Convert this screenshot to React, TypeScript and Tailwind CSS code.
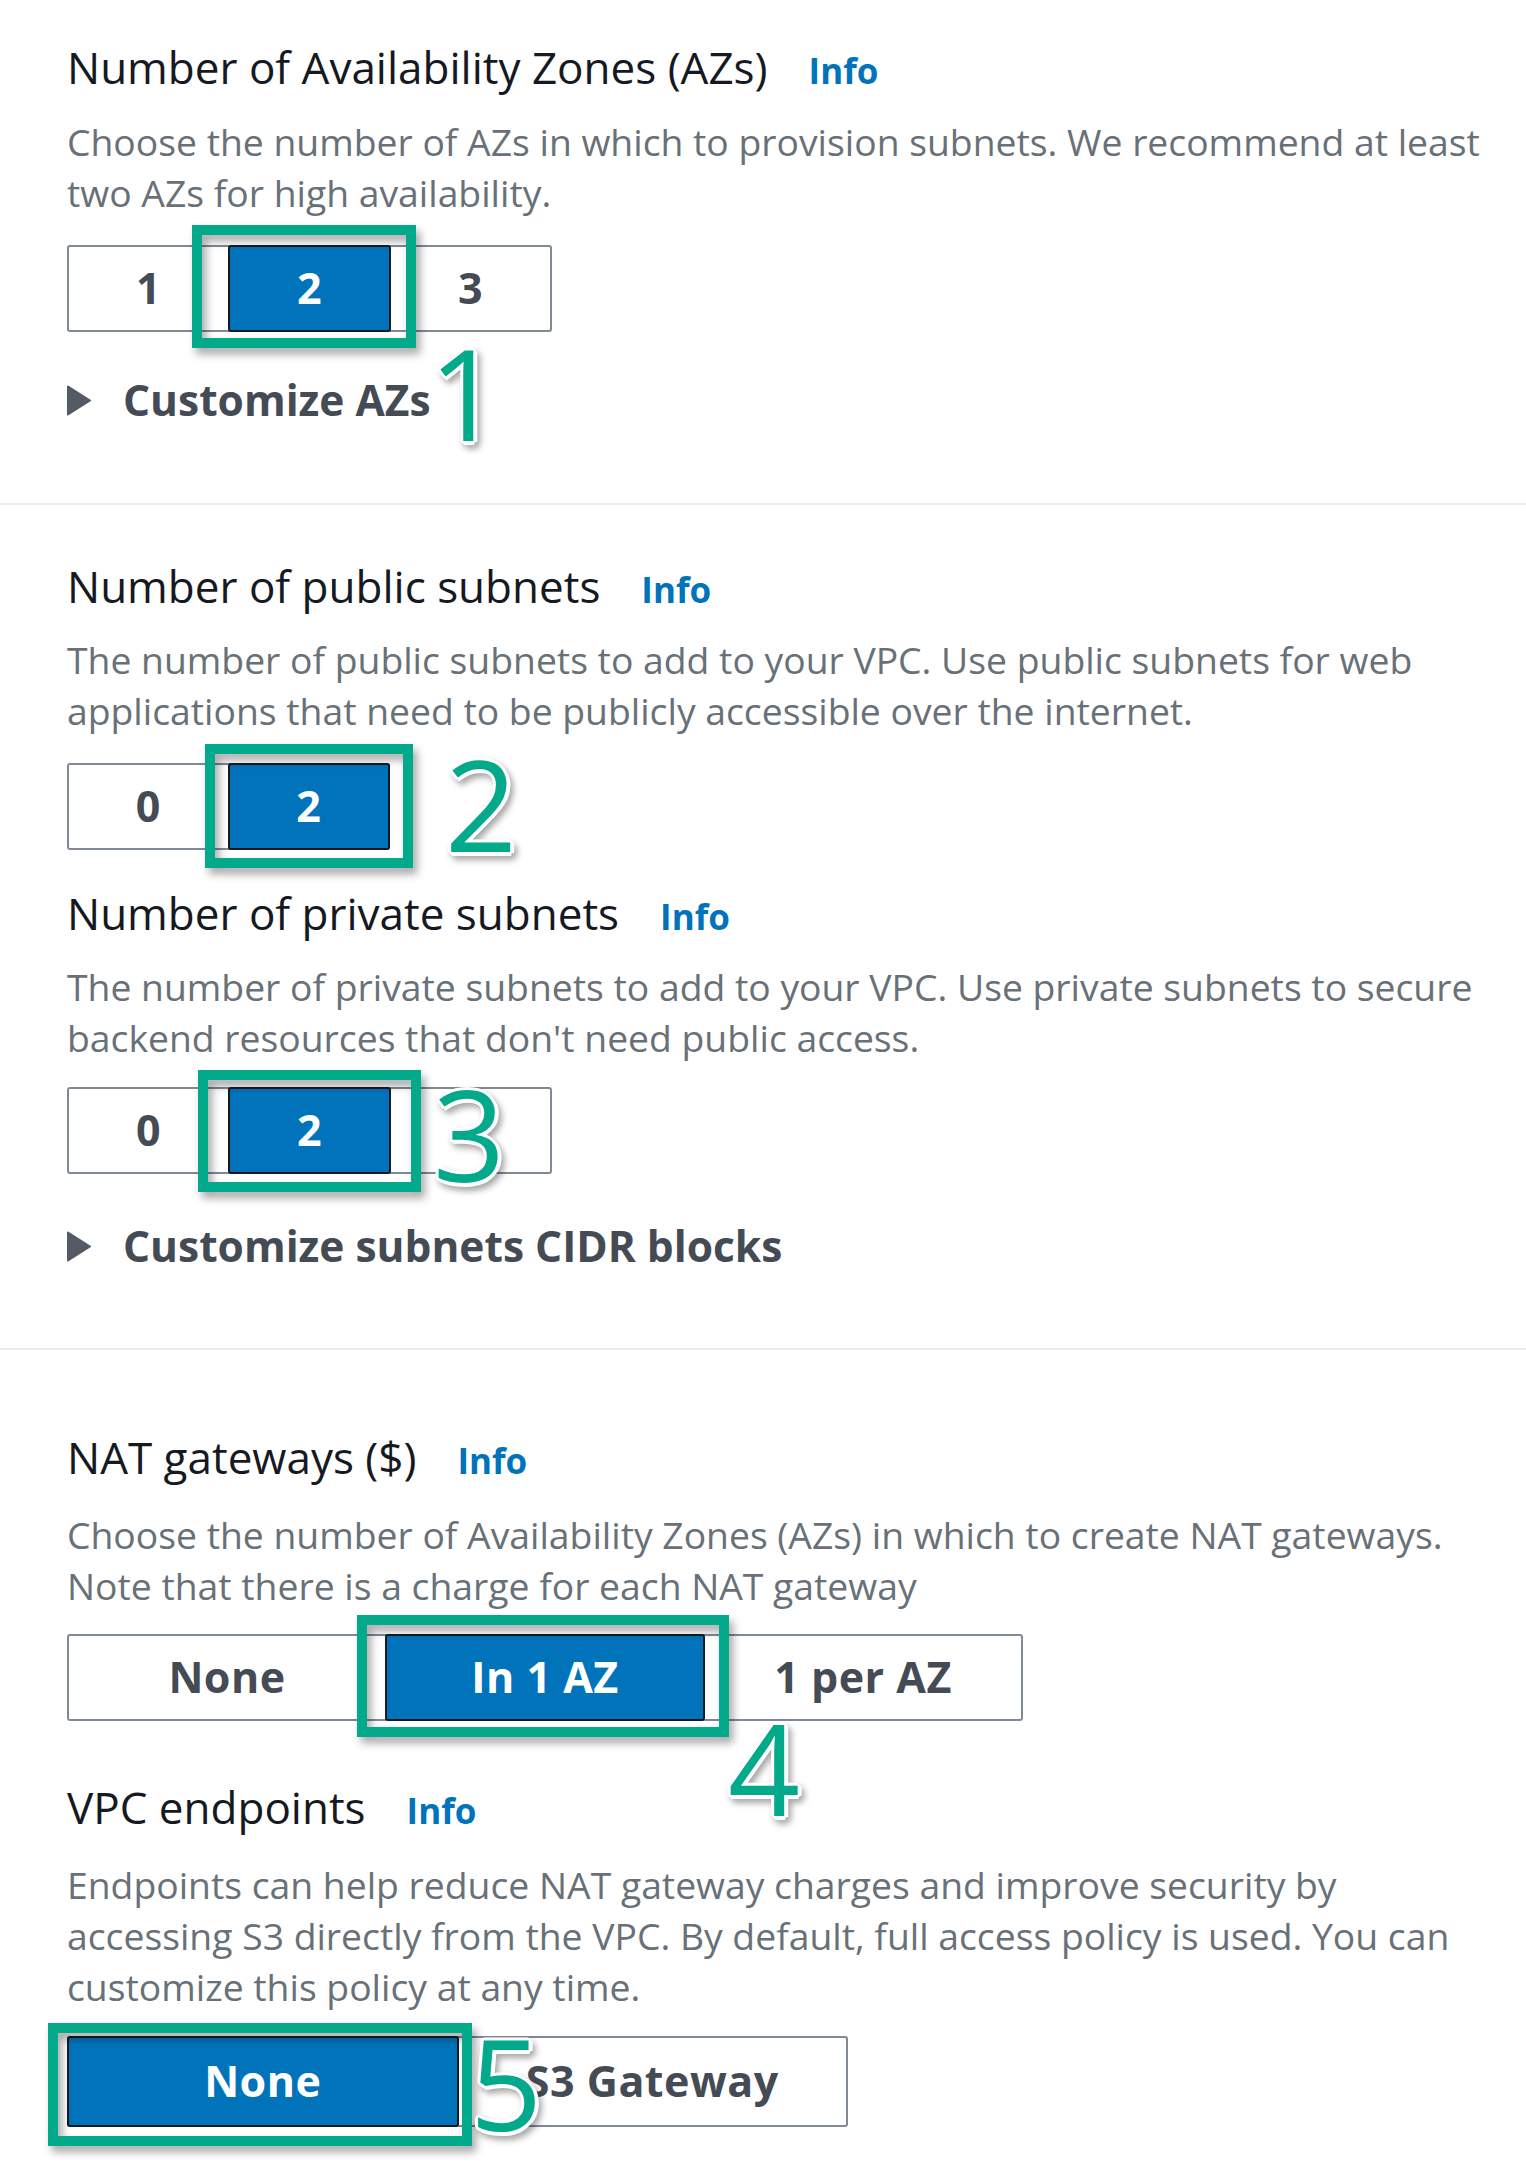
import React from "react";

const OUTLINE =
  "[text-shadow:3px_0_0_#fff,-3px_0_0_#fff,0_3px_0_#fff,0_-3px_0_#fff,2px_2px_0_#fff,-2px_-2px_0_#fff,2px_-2px_0_#fff,-2px_2px_0_#fff,4px_1px_0_#fff,1px_4px_0_#fff]";

function Title({ children }: { children: React.ReactNode }) {
  return (
    <div className="flex items-baseline gap-[41px] h-[48px] leading-[48px] whitespace-nowrap">
      <span className="text-[44px] text-[#16191f]">{children}</span>
      <span className="text-[35px] font-bold text-[#0073bb]">Info</span>
    </div>
  );
}

function Desc({ lines, className }: { lines: string[]; className: string }) {
  return (
    <div className={`text-[37.3px] leading-[51px] text-[#687078] whitespace-nowrap ${className}`}>
      {lines.map((l, i) => (
        <div key={i}>{l}</div>
      ))}
    </div>
  );
}

function Customize({ children, className }: { children: React.ReactNode; className: string }) {
  return (
    <div className={`flex items-center h-[48px] ${className}`}>
      <svg width="24" height="31" viewBox="0 0 24 31" className="shrink-0">
        <path d="M1 1.5 L23 15.5 L1 29.5 Z" fill="#545b64" stroke="#545b64" strokeWidth="2" strokeLinejoin="round" />
      </svg>
      <span className="ml-[32px] text-[42.5px] leading-[48px] font-bold text-[#444b55] whitespace-nowrap">{children}</span>
    </div>
  );
}

function Seg({
  items,
  selected,
  className,
  children,
}: {
  items: string[];
  selected: number;
  className: string;
  children?: React.ReactNode;
}) {
  return (
    <div className={`relative flex border-2 border-[#7f8a96] rounded-[3px] bg-white ${className}`}>
      {items.map((it, i) => {
        const sel = i === selected;
        const first = i === 0;
        const last = i === items.length - 1;
        return (
          <div
            key={i}
            className={
              sel
                ? `flex-1 -my-[2px] ${first ? "-ml-[2px]" : ""} ${last ? "-mr-[2px]" : ""} flex items-center justify-center border-2 border-[#16191f] rounded-[3px] bg-[#0073bb] text-white text-[43px] font-bold tracking-[0.5px] whitespace-nowrap`
                : "flex-1 flex items-center justify-center text-[#444b55] text-[43px] font-bold tracking-[0.5px] whitespace-nowrap"
            }
          >
            {it}
          </div>
        );
      })}
      {children}
    </div>
  );
}

function GreenBox({ className }: { className: string }) {
  return (
    <div
      className={`absolute border-[10px] border-[#03a98b] [filter:drop-shadow(4px_6px_4px_rgba(0,0,0,0.35))] ${className}`}
    />
  );
}

function Num({ n, className }: { n: string; className: string }) {
  return (
    <div
      className={`absolute w-[74px] text-center text-[126px] font-medium leading-none text-[#03a98b] ${OUTLINE} [filter:drop-shadow(3px_4px_3px_rgba(0,0,0,0.35))] ${className}`}
    >
      {n}
    </div>
  );
}

export default function App() {
  return (
    <div className="w-[1526px] h-[2179px] bg-white overflow-hidden font-['Open_Sans',sans-serif]">
      <section className="px-[67px] pt-[43px] pb-[79px]">
        <Title>Number of Availability Zones (AZs)</Title>
        <Desc
          className="mt-[25px]"
          lines={[
            "Choose the number of AZs in which to provision subnets. We recommend at least",
            "two AZs for high availability.",
          ]}
        />
        <Seg className="mt-[27px] w-[485px] h-[87px]" items={["1", "2", "3"]} selected={1}>
          <GreenBox className="left-[123px] top-[-22px] w-[224px] h-[123px]" />
          <Num n="1" className="left-[359px] top-[82px]" />
        </Seg>
        <Customize className="mt-[44px]">Customize AZs</Customize>
      </section>

      <div className="h-[2px] bg-[#eaeded]" />

      <section className="px-[67px] pt-[57px] pb-[78px]">
        <Title>Number of public subnets</Title>
        <Desc
          className="mt-[24px]"
          lines={[
            "The number of public subnets to add to your VPC. Use public subnets for web",
            "applications that need to be publicly accessible over the internet.",
          ]}
        />
        <Seg className="mt-[27px] w-[323px] h-[87px]" items={["0", "2"]} selected={1}>
          <GreenBox className="left-[136px] top-[-21px] w-[208px] h-[124px]" />
          <Num n="2" className="left-[375px] top-[-25px]" />
        </Seg>
        <div className="mt-[39px]">
          <Title>Number of private subnets</Title>
        </div>
        <Desc
          className="mt-[24px]"
          lines={[
            "The number of private subnets to add to your VPC. Use private subnets to secure",
            "backend resources that don't need public access.",
          ]}
        />
        <Seg className="mt-[24px] w-[485px] h-[87px]" items={["0", "2", ""]} selected={1}>
          <GreenBox className="left-[129px] top-[-19px] w-[223px] h-[122px]" />
          <Num n="3" className="left-[363px] top-[-19px]" />
        </Seg>
        <Customize className="mt-[48px]">Customize subnets CIDR blocks</Customize>
      </section>

      <div className="h-[2px] bg-[#eaeded]" />

      <section className="px-[67px] pt-[83px]">
        <Title>NAT gateways ($)</Title>
        <Desc
          className="mt-[28px]"
          lines={[
            "Choose the number of Availability Zones (AZs) in which to create NAT gateways.",
            "Note that there is a charge for each NAT gateway",
          ]}
        />
        <Seg className="mt-[23px] w-[956px] h-[87px]" items={["None", "In 1 AZ", "1 per AZ"]} selected={1}>
          <GreenBox className="left-[288px] top-[-21px] w-[372px] h-[122px]" />
          <Num n="4" className="left-[658px] top-[68px]" />
        </Seg>
        <div className="mt-[62px]">
          <Title>VPC endpoints</Title>
        </div>
        <Desc
          className="mt-[28px]"
          lines={[
            "Endpoints can help reduce NAT gateway charges and improve security by",
            "accessing S3 directly from the VPC. By default, full access policy is used. You can",
            "customize this policy at any time.",
          ]}
        />
        <Seg className="mt-[24px] w-[781px] h-[91px]" items={["None", "S3 Gateway"]} selected={0}>
          <GreenBox className="left-[-21px] top-[-15px] w-[424px] h-[123px]" />
          <Num n="5" className="left-[400px] top-[-19px]" />
        </Seg>
      </section>
    </div>
  );
}
